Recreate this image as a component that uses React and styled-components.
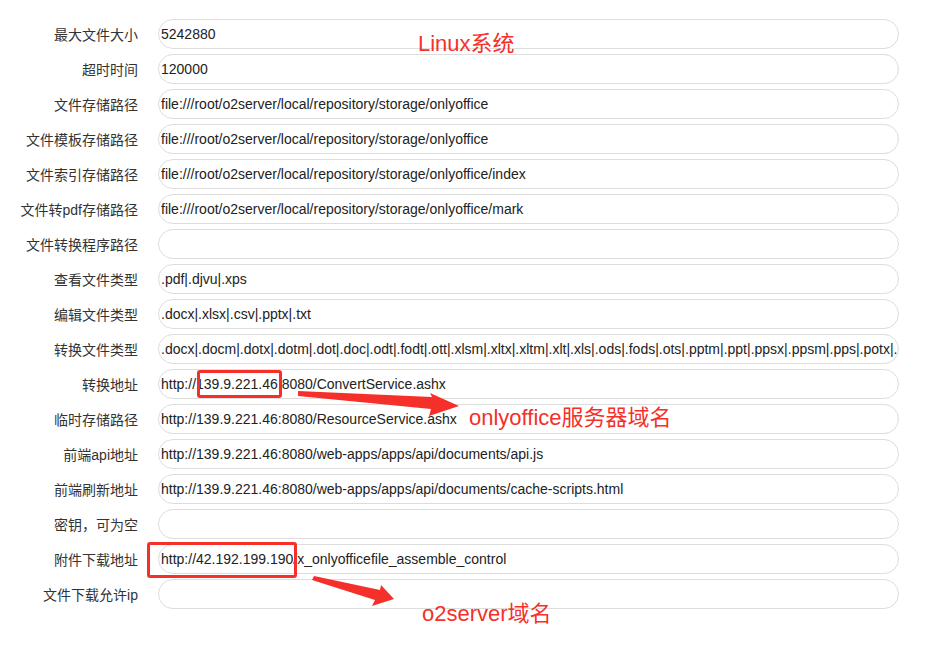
import React from 'react'
import styled, { createGlobalStyle } from 'styled-components'

const GlobalStyle = createGlobalStyle`
  body {
    margin: 0;
    background: #fff;
    font-family: "Liberation Sans", Arial, "Noto Sans CJK SC", sans-serif;
  }
`;

const fields = [
  ['最大文件大小', '5242880'],
  ['超时时间', '120000'],
  ['文件存储路径', 'file:///root/o2server/local/repository/storage/onlyoffice'],
  ['文件模板存储路径', 'file:///root/o2server/local/repository/storage/onlyoffice'],
  ['文件索引存储路径', 'file:///root/o2server/local/repository/storage/onlyoffice/index'],
  ['文件转pdf存储路径', 'file:///root/o2server/local/repository/storage/onlyoffice/mark'],
  ['文件转换程序路径', ''],
  ['查看文件类型', '.pdf|.djvu|.xps'],
  ['编辑文件类型', '.docx|.xlsx|.csv|.pptx|.txt'],
  ['转换文件类型', '.docx|.docm|.dotx|.dotm|.dot|.doc|.odt|.fodt|.ott|.xlsm|.xltx|.xltm|.xlt|.xls|.ods|.fods|.ots|.pptm|.ppt|.ppsx|.ppsm|.pps|.potx|.'],
  ['转换地址', 'http://139.9.221.46:8080/ConvertService.ashx'],
  ['临时存储路径', 'http://139.9.221.46:8080/ResourceService.ashx'],
  ['前端api地址', 'http://139.9.221.46:8080/web-apps/apps/api/documents/api.js'],
  ['前端刷新地址', 'http://139.9.221.46:8080/web-apps/apps/api/documents/cache-scripts.html'],
  ['密钥，可为空', ''],
  ['附件下载地址', 'http://42.192.199.190/x_onlyofficefile_assemble_control'],
  ['文件下载允许ip', ''],
];

const App = () => {
  return (
    <Page>
      <GlobalStyle />
      <Form>
        {fields.map(([label, value]) => (
          <Row key={label}>
            <Label>{label}</Label>
            <Field>{value}</Field>
          </Row>
        ))}
      </Form>

      {/* hand-drawn annotations on top of the screenshot */}
      <Note $x={418} $y={25}>Linux系统</Note>
      <Note $x={469} $y={399}>onlyoffice服务器域名</Note>
      <Note $x={422} $y={595}>o2server域名</Note>

      <Mark $x={197} $y={370} $w={85} $h={28} />
      <Mark $x={147} $y={542} $w={150} $h={36} />

      <Arrows width="929" height="645" viewBox="0 0 929 645">
        <polygon points="298,391 432,397 430,393 459,406 429,416 431,409 298,396" fill="#f5302a" />
        <polygon points="314,576 380,590 381,585 394,599 372,606 375,600 312,580" fill="#f5302a" />
      </Arrows>
    </Page>
  )
}

const Page = styled.div`
  position: relative;
  width: 929px;
  height: 645px;
  overflow: hidden;
`;

const Form = styled.div`
  display: flex;
  flex-direction: column;
  gap: 5px;
  padding: 19px 30px 0 0;
`;

const Row = styled.div`
  display: flex;
  align-items: center;
  gap: 20px;
`;

const Label = styled.div`
  flex: 0 0 138px;
  text-align: right;
  font-size: 14px;
  color: #333;
  white-space: nowrap;
`;

const Field = styled.div`
  flex: 1;
  min-width: 0;
  box-sizing: border-box;
  height: 30px;
  line-height: 28px;
  border: 1px solid #ddd;
  border-radius: 15px;
  padding: 0 2px;
  font-size: 14px;
  color: #222;
  white-space: nowrap;
  overflow: hidden;
`;

const Note = styled.div`
  position: absolute;
  left: ${p => p.$x}px;
  top: ${p => p.$y}px;
  font-size: 22px;
  color: #f5302a;
  white-space: nowrap;
`;

const Mark = styled.div`
  position: absolute;
  left: ${p => p.$x}px;
  top: ${p => p.$y}px;
  width: ${p => p.$w}px;
  height: ${p => p.$h}px;
  box-sizing: border-box;
  border: 3px solid #f5302a;
  border-radius: 3px;
`;

const Arrows = styled.svg`
  position: absolute;
  left: 0;
  top: 0;
  pointer-events: none;
`;

export default App
